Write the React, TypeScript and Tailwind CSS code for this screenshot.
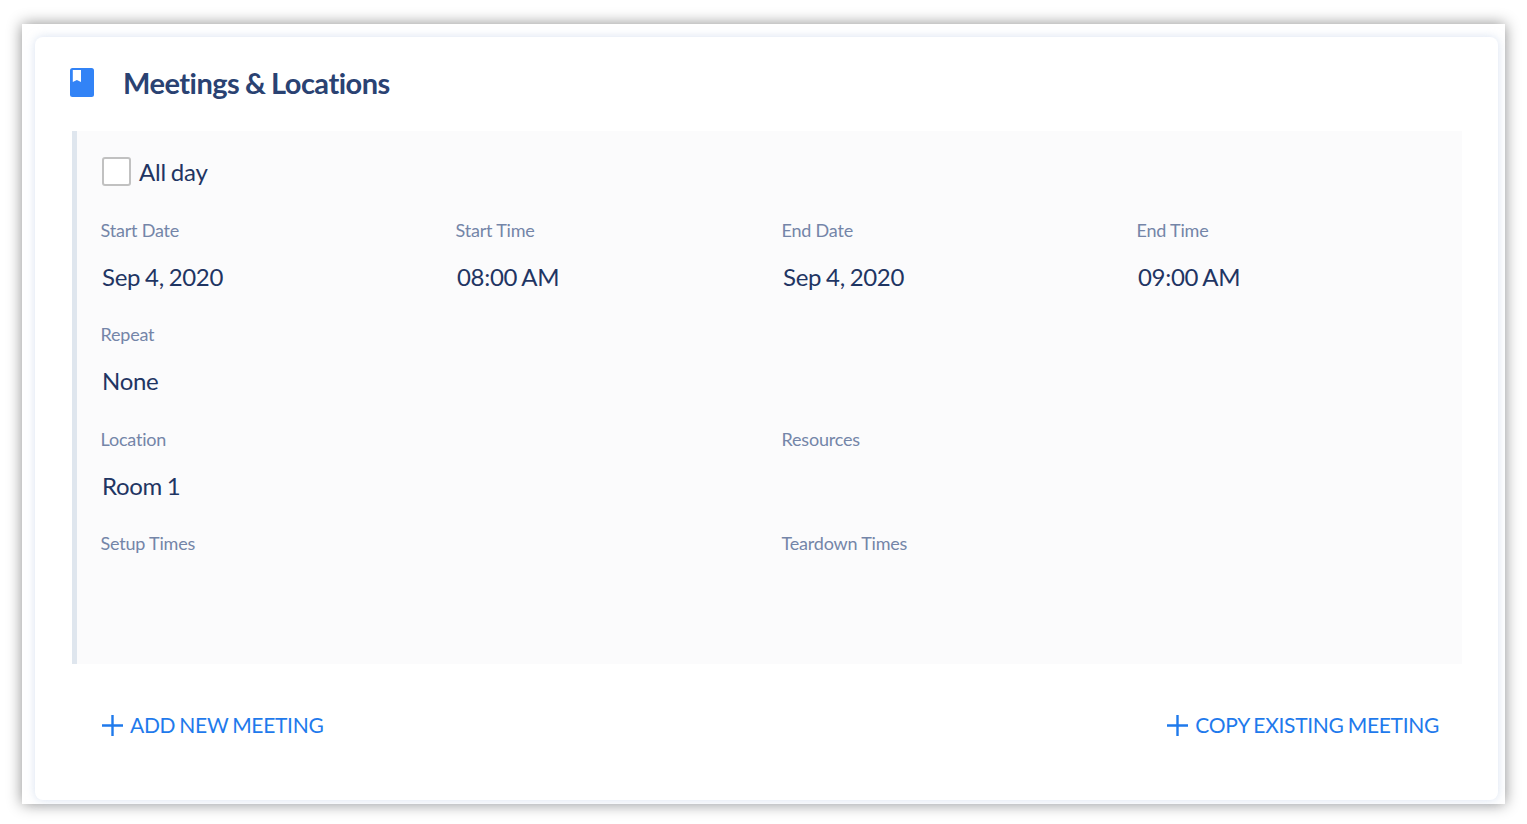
const lato = "font-['Lato','Noto_Sans',sans-serif]";

function Field({ label, value, className = "" }: { label: string; value?: string; className?: string }) {
  return (
    <div className={className}>
      <div className="pl-[0.5px] text-[18px] leading-[24px] tracking-[-0.2px] text-[#7485a8]">{label}</div>
      {value && (
        <div className="mt-[20px] pl-[2px] text-[24px] leading-[30px] tracking-[-0.3px] text-[#1f3563] [word-spacing:-1px]">
          {value}
        </div>
      )}
    </div>
  );
}

function PlusLink({ label }: { label: string }) {
  return (
    <button className="flex items-center gap-[7px] text-[21px] leading-[30px] tracking-[-0.3px] text-[#1f7aec] [word-spacing:-1px]">
      <svg width="21" height="21" viewBox="0 0 21 21" fill="none" stroke="#1f7aec" strokeWidth="2.4">
        <path d="M10.5 0v21M0 10.5h21" />
      </svg>
      {label}
    </button>
  );
}

export default function App() {
  return (
    <div className={`${lato} h-[824px] w-[1527px] bg-white pl-[22px] pr-[22px] pt-[24px]`}>
      <div className="h-[780px] w-[1483px] bg-white pl-[13px] pt-[13px] shadow-[0_0_14px_rgba(0,0,0,0.45)]">
        <div className="flex h-[763px] w-[1463px] flex-col rounded-[8px] bg-white pl-[35px] pr-[36px] shadow-[0_0_10px_rgba(190,205,230,0.6)]">
          <div className="flex h-[94px] items-center pb-[2px]">
            <svg width="24" height="29" viewBox="0 0 24 29" className="-mt-[1px]">
              <rect width="24" height="29" rx="2.5" fill="#3283f6" />
              <path d="M2.8 2h8.2v12l-4.1-2l-4.1 2z" fill="#fff" />
            </svg>
            <h1 className="ml-[29px] text-[29px] font-bold leading-[36px] tracking-[-0.5px] text-[#2a4272] [word-spacing:-1px]">
              Meetings &amp; Locations
            </h1>
          </div>

          <div className="ml-[2px] h-[533px] w-[1390px] border-l-[5px] border-[#dfe6ee] bg-[#fbfbfc] pl-[24px] pt-[25px]">
            <label className="flex h-[30px] items-center">
              <span className="ml-[1px] mt-[1px] h-[29px] w-[29px] rounded-[3px] border-2 border-[#c1c1c1] bg-white" />
              <span className="ml-[8px] pt-[2px] text-[24px] leading-[30px] tracking-[-0.2px] text-[#1f3563] [word-spacing:-1px]">
                All day
              </span>
            </label>

            <div className="-ml-[1px] mt-[32px] grid grid-cols-[355px_326px_355px_1fr] grid-rows-[104px_105px_104px_1fr]">
              <Field label="Start Date" value="Sep 4, 2020" />
              <Field label="Start Time" value="08:00 AM" />
              <Field label="End Date" value="Sep 4, 2020" />
              <Field label="End Time" value="09:00 AM" />
              <Field label="Repeat" value="None" className="col-span-4" />
              <Field label="Location" value="Room 1" className="col-span-2" />
              <Field label="Resources" className="col-span-2" />
              <Field label="Setup Times" className="col-span-2" />
              <Field label="Teardown Times" className="col-span-2" />
            </div>
          </div>

          <div className="mt-[46px] flex w-[1392px] justify-between pl-[32px] pr-[23px]">
            <PlusLink label="ADD NEW MEETING" />
            <PlusLink label="COPY EXISTING MEETING" />
          </div>
        </div>
      </div>
    </div>
  );
}
